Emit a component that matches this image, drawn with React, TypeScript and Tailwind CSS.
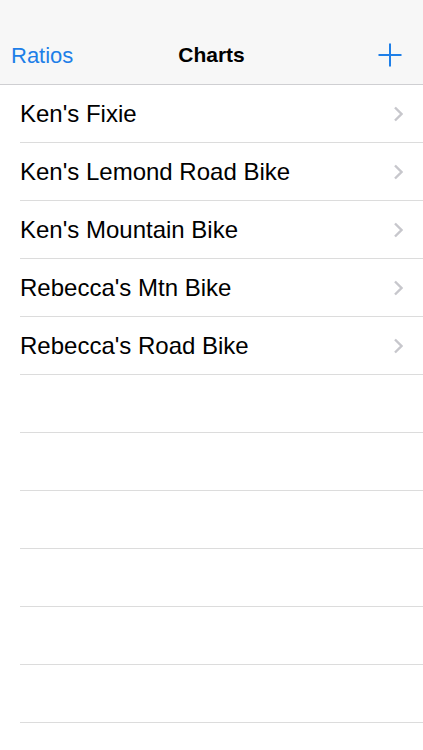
import React from "react";

const bikes = [
  "Ken's Fixie",
  "Ken's Lemond Road Bike",
  "Ken's Mountain Bike",
  "Rebecca's Mtn Bike",
  "Rebecca's Road Bike",
];

const Chevron = () => (
  <svg width="10" height="16" viewBox="0 0 10 16" fill="none">
    <path d="M2 1.5 L8.5 8 L2 14.5" stroke="#c7c7cc" strokeWidth="2.4" />
  </svg>
);

const PlusIcon = () => (
  <svg width="24" height="24" viewBox="0 0 24 24" fill="none">
    <path d="M12 0.5 V23.5 M0.5 12 H23.5" stroke="#1e7fe8" strokeWidth="2" />
  </svg>
);

const App = () => {
  const emptyRows = Array.from({ length: 8 });
  return (
    <div
      className="w-[423px] h-[750px] overflow-hidden bg-white"
      style={{ fontFamily: '"Liberation Sans", Arial, sans-serif' }}
    >
      <div className="h-[85px] bg-[#f7f7f7] border-b border-[#cfcfd2] pt-[26px] flex items-center justify-between pl-[11px] pr-[21px] relative">
        <span className="text-[22px] text-[#1e7fe8]">Ratios</span>
        <span className="absolute left-0 right-0 text-center text-[21px] font-bold text-black pointer-events-none pt-[26px] top-0 bottom-0 flex items-center justify-center">
          Charts
        </span>
        <PlusIcon />
      </div>
      <div className="pl-[20px]">
        {bikes.map((b) => (
          <div
            key={b}
            className="h-[58px] border-b border-[#dcdcdc] flex items-center justify-between pr-[20px]"
          >
            <span className="text-[24px] text-black">{b}</span>
            <Chevron />
          </div>
        ))}
        {emptyRows.map((_, i) => (
          <div key={i} className="h-[58px] border-b border-[#dcdcdc]" />
        ))}
      </div>
    </div>
  );
};

export default App;
